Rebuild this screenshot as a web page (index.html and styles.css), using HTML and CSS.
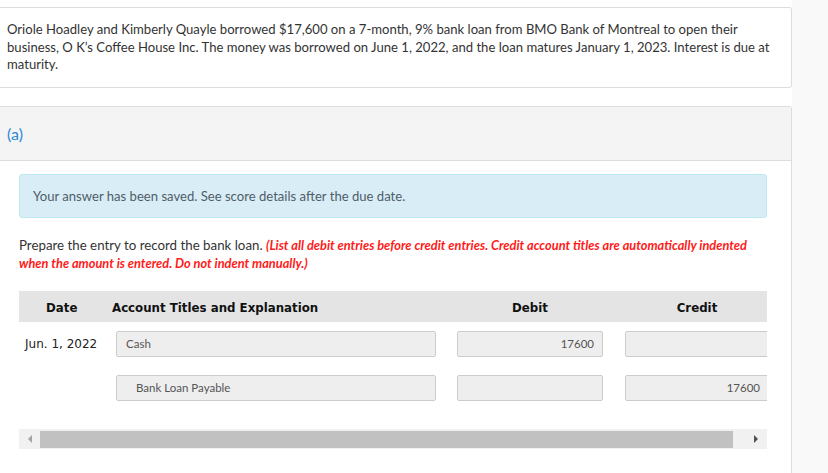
FILE: index.html
```html
<!DOCTYPE html>
<html>
<head>
<meta charset="utf-8">
<link rel="stylesheet" href="styles.css">
</head>
<body>
<div class="page">
  <div class="main">
    <div class="card problem">
      Oriole Hoadley and Kimberly Quayle borrowed $17,600 on a 7-month, 9% bank loan from BMO Bank of Montreal to open their business, O K’s Coffee House Inc. The money was borrowed on June 1, 2022, and the loan matures January 1, 2023. Interest is due at maturity.
    </div>
    <div class="section">
      <div class="section-head">(a)</div>
      <div class="section-body">
        <div class="alert">Your answer has been saved. See score details after the due date.</div>
        <p class="instr">Prepare the entry to record the bank loan. <em>(List all debit entries before credit entries. Credit account titles are automatically indented when the amount is entered. Do not indent manually.)</em></p>
        <div class="scroll">
          <div class="table">
            <div class="thead">
              <div class="th th-date">Date</div>
              <div class="th th-acct">Account Titles and Explanation</div>
              <div class="th th-debit">Debit</div>
              <div class="th th-credit">Credit</div>
            </div>
            <div class="row">
              <div class="date">Jun. 1, 2022</div>
              <div class="field acct">Cash</div>
              <div class="field num debit">17600</div>
              <div class="field num credit"></div>
            </div>
            <div class="row">
              <div class="date"></div>
              <div class="field acct indent">Bank Loan Payable</div>
              <div class="field num debit"></div>
              <div class="field num credit">17600</div>
            </div>
          </div>
        </div>
        <div class="hscroll">
          <div class="arrow arrow-left"></div>
          <div class="thumb"></div>
          <div class="arrow arrow-right"></div>
        </div>
      </div>
    </div>
  </div>
  <div class="side"></div>
</div>
</body>
</html>
```
FILE: styles.css
```css
html, body {
  margin: 0;
  padding: 0;
  background: #f9f9f9;
  font-family: Lato, "Open Sans", sans-serif;
  color: #333;
  height: 100%;
}
.page {
  display: flex;
  height: 473px;
  overflow: hidden;
}
.main {
  width: 792px;
  background: #fff;
  padding-top: 7px;
  flex-shrink: 0;
}
.side {
  flex: 1;
  background: #f9f9f9;
}
.card {
  border: 1px solid #ddd;
  border-left: none;
  border-radius: 0 3px 3px 0;
}
.problem {
  padding: 13px 12px 13px 7px;
  font-size: 13.1px;
  line-height: 17.5px;
  color: #333;
}
.section {
  margin-top: 18px;
  border-top: 1px solid #ddd;
  border-right: 1px solid #ddd;
  border-radius: 0 3px 0 0;
  height: 400px;
}
.section-head {
  background: #f4f4f4;
  height: 53px;
  border-bottom: 1px solid #ddd;
  display: flex;
  align-items: center;
  padding-left: 7px;
  font-size: 16px;
  color: #2b8ad6;
}
.section-body {
  padding: 13px 24px 0 19px;
}
.alert {
  height: 42px;
  background: #d9edf7;
  border: 1px solid #bce8f1;
  border-radius: 3px;
  display: flex;
  align-items: center;
  padding-left: 13px;
  font-size: 13.1px;
  color: #4f5d68;
}
.instr {
  margin: 18px 0 0;
  font-size: 13.3px;
  line-height: 18px;
  color: #333;
}
.instr em {
  color: #ff1a1a;
  font-weight: 700;
  font-style: italic;
  font-size: 12.8px;
}
.scroll {
  margin-top: 19px;
  width: 748px;
  overflow: hidden;
}
.table {
  width: 760px;
}
.thead {
  display: flex;
  align-items: center;
  box-sizing: border-box;
  height: 31px;
  padding-top: 3px;
  background: #e4e4e4;
  font-family: "DejaVu Sans", Verdana, sans-serif;
  font-weight: 700;
  font-size: 11.8px;
  color: #111;
}
.th-date {
  width: 66px;
  padding-left: 27px;
}
.th-acct {
  width: 345px;
}
.th-debit {
  width: 146px;
  text-align: center;
}
.th-credit {
  width: 144px;
  margin-left: 22px;
  text-align: center;
}
.row {
  display: flex;
  align-items: center;
  margin-top: 9px;
}
.row + .row {
  margin-top: 18px;
}
.date {
  width: 91px;
  padding-left: 6px;
  font-family: "DejaVu Sans", Verdana, sans-serif;
  font-size: 12px;
  color: #222;
}
.field {
  box-sizing: border-box;
  height: 26px;
  background: #eee;
  border: 1px solid #ccc;
  border-radius: 2px;
  font-size: 11.5px;
  color: #555;
  display: flex;
  align-items: center;
  padding: 0 8px 0 9px;
}
.acct {
  width: 320px;
}
.indent {
  padding-left: 19px;
}
.num {
  justify-content: flex-end;
}
.debit {
  width: 146px;
  margin-left: 21px;
}
.credit {
  width: 144px;
  margin-left: 22px;
}
.hscroll {
  margin-top: 28px;
  width: 748px;
  height: 20px;
  background: #f1f1f1;
  position: relative;
}
.thumb {
  position: absolute;
  left: 21px;
  top: 2px;
  width: 693px;
  height: 17px;
  background: #c1c1c1;
}
.arrow {
  position: absolute;
  top: 6px;
  width: 0;
  height: 0;
  border-top: 4px solid transparent;
  border-bottom: 4px solid transparent;
}
.arrow-left {
  left: 9px;
  border-right: 4px solid #a3a3a3;
}
.arrow-right {
  right: 9px;
  border-left: 4px solid #505050;
}
```
